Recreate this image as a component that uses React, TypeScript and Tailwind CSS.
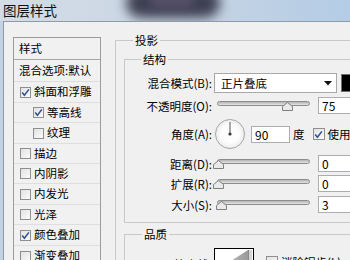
import React from "react";

function Check({ checked = false, size = "s" }: { checked?: boolean; size?: "s" | "m" }) {
  return (
    <span
      className={
        size === "s"
          ? "inline-flex w-[11px] h-[11px] shrink-0 items-center justify-center border border-[#8e8f8f] bg-gradient-to-br from-[#e2e2e2] to-[#fbfbfb]"
          : "inline-flex w-[12px] h-[12px] shrink-0 items-center justify-center border border-[#8e8f8f] bg-gradient-to-br from-[#e2e2e2] to-[#fbfbfb]"
      }
    >
      {checked && (
        <svg width="9" height="9" viewBox="0 0 9 9">
          <path d="M1.2 4.6 L3.4 7.2 L7.9 1.4" stroke="#2d4f8e" strokeWidth="1.5" fill="none" />
        </svg>
      )}
    </span>
  );
}

function Thumb({ pos }: { pos: string }) {
  return (
    <svg className={"absolute top-[5px] " + pos} width="11" height="9" viewBox="0 0 11 9">
      <path d="M0.5 8.5 L0.5 4.5 L5.5 0.5 L10.5 4.5 L10.5 8.5 Z" fill="#e9e9e9" stroke="#7f7f7f" />
    </svg>
  );
}

function Slider({ pos }: { pos: string }) {
  return (
    <div className="relative w-[99px] h-[17px] shrink-0 px-[3px] pt-[4px]">
      <div className="h-[5px] rounded-full border border-[#8c8c8c] bg-gradient-to-b from-[#b4b4b4] to-[#e4e4e4]" />
      <Thumb pos={pos} />
    </div>
  );
}

function Field({ value, w = "w-[40px]" }: { value: string; w?: string }) {
  return (
    <div className={"h-[17px] shrink-0 border border-[#abadb3] bg-white pl-[3px] text-[12px] leading-[15px] " + w}>
      {value}
    </div>
  );
}

function Label({ children }: { children: React.ReactNode }) {
  return <div className="w-[87px] shrink-0 text-right whitespace-nowrap leading-[14px]">{children}</div>;
}

const items: { t: string; c?: boolean; sub?: boolean; h: string }[] = [
  { t: "斜面和浮雕", c: true, h: "h-[21px]" },
  { t: "等高线", c: true, sub: true, h: "h-[20px]" },
  { t: "纹理", sub: true, h: "h-[21px]" },
  { t: "描边", h: "h-[20px]" },
  { t: "内阴影", h: "h-[20px]" },
  { t: "内发光", h: "h-[21px]" },
  { t: "光泽", h: "h-[20px]" },
  { t: "颜色叠加", c: true, h: "h-[21px]" },
  { t: "渐变叠加", h: "h-[21px]" },
];

export default function App() {
  return (
    <div className="w-[350px] h-[260px] overflow-hidden flex flex-col bg-[#c3d2e2] text-[11.5px] text-black font-['Noto_Sans_CJK_SC','Noto_Sans',sans-serif]">
      {/* title bar */}
      <div className="relative h-[21px] shrink-0 overflow-hidden flex items-center pl-[3px] bg-gradient-to-r from-[#d4dde7] via-[#c8d5e3] to-[#b4cce6]">
        <div className="absolute left-[126px] -top-[12px] w-[94px] h-[30px] rounded-full bg-[#3d4051] blur-[6px]" />
        <div className="absolute left-[150px] -top-[8px] w-[44px] h-[16px] rounded-full bg-[#5d5470] blur-[5px] opacity-80" />
        <span className="relative text-[13.5px] leading-none text-[#111]">图层样式</span>
      </div>

      {/* body */}
      <div className="flex-1 ml-[3px] flex items-start border-l border-t border-[#9199a3] bg-[#f0f0f0] pl-[9px] pt-[11px]">
        {/* left list */}
        <div className="mt-[4px] w-[88px] shrink-0 flex flex-col border border-[#9c9c9c] bg-[#f1f1f1]">
          <div className="h-[22px] flex items-center pl-[5px] border-b border-[#a6a6a6]">样式</div>
          <div className="h-[22px] flex items-center pl-[5px] border-b border-[#dcdcdc] whitespace-nowrap">
            混合选项:默认
          </div>
          {items.map((it) => (
            <div
              key={it.t}
              className={
                "flex items-center gap-[3px] border-b border-[#dedede] whitespace-nowrap " +
                it.h +
                (it.sub ? " pl-[19px]" : " pl-[6px]")
              }
            >
              <Check checked={it.c} />
              <span>{it.t}</span>
            </div>
          ))}
        </div>

        {/* right: 投影 */}
        <fieldset className="ml-[14px] w-[300px] shrink-0 border border-[#c9c9c9] pb-[20px]">
          <legend className="ml-[17px] px-[2px] leading-[14px]">投影</legend>
          <div className="pl-[8px] pt-[5px]">
            {/* 结构 */}
            <fieldset className="border border-[#c9c9c9] pt-[7px] pb-[9px]">
              <legend className="ml-[16px] px-[2px] leading-[14px]">结构</legend>

              <div className="flex items-center h-[20px]">
                <Label>混合模式(B):</Label>
                <div className="ml-[2px] w-[123px] h-[20px] shrink-0 flex items-center justify-between border border-[#a9a9a9] bg-white pl-[6px] pr-[4px]">
                  <span className="leading-[14px]">正片叠底</span>
                  <svg width="8" height="5" viewBox="0 0 8 5">
                    <path d="M0 0 L8 0 L4 4.5 Z" fill="#111" />
                  </svg>
                </div>
                <div className="ml-[4px] w-[20px] h-[18px] shrink-0 border border-[#6f6f6f] bg-black" />
              </div>

              <div className="mt-[4px] flex items-center h-[17px]">
                <Label>不透明度(O):</Label>
                <div className="ml-[2px]">
                  <Slider pos="left-[68px]" />
                </div>
                <div className="ml-[5px]">
                  <Field value="75" />
                </div>
              </div>

              <div className="mt-[5px] flex items-center h-[30px]">
                <Label>角度(A):</Label>
                <div className="ml-[3px] w-[30px] h-[30px] shrink-0 rounded-full border border-[#a6a6a6] bg-[radial-gradient(circle,#fdfdfd_45%,#dcdcdc_100%)]">
                  <svg width="28" height="28" viewBox="0 0 28 28">
                    <line x1="14" y1="14" x2="14" y2="2" stroke="#555" strokeWidth="1" />
                    <circle cx="14" cy="14" r="1.6" fill="#333" />
                  </svg>
                </div>
                <div className="ml-[6px]">
                  <Field value="90" w="w-[39px]" />
                </div>
                <span className="ml-[3px] leading-[14px]">度</span>
                <div className="ml-[8px] flex items-center">
                  <Check checked size="m" />
                </div>
                <span className="ml-[3px] leading-[14px] whitespace-nowrap">使用全局光(G)</span>
              </div>

              <div className="mt-[6px] flex items-center h-[17px]">
                <Label>距离(D):</Label>
                <div className="ml-[2px]">
                  <Slider pos="-left-[1px]" />
                </div>
                <div className="ml-[5px]">
                  <Field value="0" />
                </div>
              </div>

              <div className="mt-[3px] flex items-center h-[17px]">
                <Label>扩展(R):</Label>
                <div className="ml-[2px]">
                  <Slider pos="-left-[1px]" />
                </div>
                <div className="ml-[5px]">
                  <Field value="0" />
                </div>
              </div>

              <div className="mt-[4px] flex items-center h-[17px]">
                <Label>大小(S):</Label>
                <div className="ml-[2px]">
                  <Slider pos="left-[2px]" />
                </div>
                <div className="ml-[5px]">
                  <Field value="3" />
                </div>
              </div>
            </fieldset>

            {/* 品质 */}
            <fieldset className="mt-[4px] border border-[#c9c9c9] pt-[7px] pb-[10px]">
              <legend className="ml-[17px] px-[2px] leading-[14px]">品质</legend>
              <div className="flex items-start">
                <div className="w-[87px] shrink-0 pt-[9px] text-right leading-[14px]">等高线:</div>
                <div className="ml-[2px] w-[40px] h-[36px] shrink-0 border border-black bg-white">
                  <svg width="38" height="34" viewBox="0 0 38 34">
                    <defs>
                      <linearGradient id="cg" x1="0" y1="0" x2="1" y2="0">
                        <stop offset="0" stopColor="#e6e6e6" />
                        <stop offset="1" stopColor="#9a9a9a" />
                      </linearGradient>
                    </defs>
                    <polygon points="33,1 33,34 -18,34" fill="url(#cg)" />
                    <rect x="33" y="1" width="4" height="33" fill="#d6d6d6" />
                    <line x1="33.5" y1="1" x2="33.5" y2="34" stroke="#8a8a8a" />
                  </svg>
                </div>
                <div className="ml-[12px] mt-[7px] flex items-center">
                  <Check size="m" />
                  <span className="ml-[3px] leading-[14px] whitespace-nowrap">消除锯齿(L)</span>
                </div>
              </div>
            </fieldset>
          </div>
        </fieldset>
      </div>
    </div>
  );
}
